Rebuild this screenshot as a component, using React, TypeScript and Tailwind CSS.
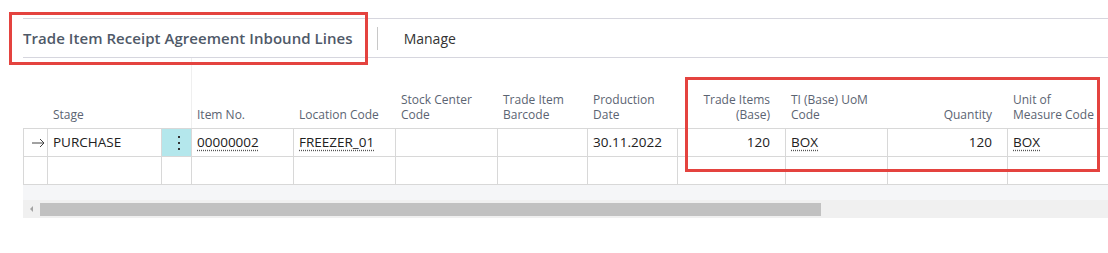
import React from 'react';

type Col = {
    key: string;
    label: string[];
    w: string;
    align?: 'right';
};

/* column widths include the 1px left grid line */
const cols: Col[] = [
    { key: 'arrow', label: [], w: 'w-[24px]' },
    { key: 'stage', label: ['Stage'], w: 'w-[114px]' },
    { key: 'dots', label: [], w: 'w-[30px]' },
    { key: 'item', label: ['Item No.'], w: 'w-[102px]' },
    { key: 'loc', label: ['Location Code'], w: 'w-[102px]' },
    { key: 'stock', label: ['Stock Center', 'Code'], w: 'w-[102px]' },
    { key: 'barcode', label: ['Trade Item', 'Barcode'], w: 'w-[90px]' },
    { key: 'date', label: ['Production', 'Date'], w: 'w-[90px]' },
    { key: 'tib', label: ['Trade Items', '(Base)'], w: 'w-[108px]', align: 'right' },
    { key: 'tiuom', label: ['TI (Base) UoM', 'Code'], w: 'w-[102px]' },
    { key: 'qty', label: ['Quantity'], w: 'w-[120px]', align: 'right' },
    { key: 'uom', label: ['Unit of', 'Measure Code'], w: 'w-[130px]' },
];

const link = 'underline decoration-dotted underline-offset-[2px] decoration-[#555]';

const row: Record<string, React.ReactNode> = {
    stage: 'PURCHASE',
    item: <span className={link}>00000002</span>,
    loc: <span className={link}>FREEZER_01</span>,
    date: '30.11.2022',
    tib: '120',
    tiuom: <span className={link}>BOX</span>,
    qty: '120',
    uom: <span className={link}>BOX</span>,
};

function RowArrow() {
    return (
        <svg width="13" height="10" viewBox="0 0 13 10" fill="none" stroke="#444" strokeWidth="1">
            <path d="M0 5h12M8 1l4 4-4 4" />
        </svg>
    );
}

function Dots() {
    return (
        <div className="flex flex-col gap-[4px]">
            <span className="block w-[2px] h-[2px] bg-[#333]" />
            <span className="block w-[2px] h-[2px] bg-[#333]" />
            <span className="block w-[2px] h-[2px] bg-[#333]" />
        </div>
    );
}

export default function App() {
    return (
        <div className="relative w-[1108px] h-[253px] bg-white overflow-hidden font-['Open_Sans',sans-serif]">
            {/* ── Action bar ── */}
            <div className="pt-[18px] pl-[23px]">
                <div className="h-[40px] flex items-center border-y border-[#d6d6de]">
                    <h1 className="text-[15px] font-semibold text-[#4f5968] tracking-[0.05px] pt-[1px]">
                        Trade Item Receipt Agreement Inbound Lines
                    </h1>
                    <div className="ml-[24px] w-px h-[23px] bg-[#c8c8c8]" />
                    <span className="ml-[26px] text-[14px] text-[#333] pt-[1px]">Manage</span>
                </div>
            </div>

            {/* ── Grid ── */}
            <div className="pl-[23px]">
                {/* header */}
                <div className="flex h-[70px]">
                    {cols.map((c) => (
                        <div
                            key={c.key}
                            className={`${c.w} shrink-0 flex flex-col justify-end pb-[6px] border-l ${c.key === 'item' ? 'border-[#efefef]' : 'border-transparent'} ${c.align === 'right' ? 'items-end pr-[15px]' : 'pl-[5px]'}`}
                        >
                            {c.label.map((l) => (
                                <span
                                    key={l}
                                    className={`text-[12px] leading-[15px] text-[#5b6472] whitespace-nowrap ${c.align === 'right' ? 'text-right' : ''}`}
                                >
                                    {l}
                                </span>
                            ))}
                        </div>
                    ))}
                </div>

                {/* row 1 */}
                <div className="flex h-[29px] border-t border-[#d8d8d8]">
                    {cols.map((c) => (
                        <div
                            key={c.key}
                            className={`${c.w} shrink-0 flex items-center border-l border-b border-[#d8d8d8] text-[13.5px] text-[#212121] whitespace-nowrap ${c.key === 'dots' ? 'justify-center bg-[#b4e7ec]' : ''} ${c.key === 'arrow' ? 'justify-center' : ''} ${c.align === 'right' ? 'justify-end pr-[15px]' : 'pl-[5px]'}`}
                        >
                            {c.key === 'arrow' ? <RowArrow /> : c.key === 'dots' ? <Dots /> : row[c.key]}
                        </div>
                    ))}
                </div>

                {/* row 2 (empty) */}
                <div className="flex h-[28px]">
                    {cols.map((c) => (
                        <div key={c.key} className={`${c.w} shrink-0 border-l border-b border-[#d8d8d8]`} />
                    ))}
                </div>

                {/* footer band */}
                <div className="h-[15px] bg-[#f5f6f8]" />

                {/* horizontal scrollbar */}
                <div className="h-[18px] bg-[#f0f0f0] flex items-center">
                    <div className="w-[17px] flex justify-center">
                        <div className="w-0 h-0 border-y-[3px] border-y-transparent border-r-[3px] border-r-[#a3a3a3]" />
                    </div>
                    <div className="w-[781px] h-[13px] bg-[#c1c1c1]" />
                </div>
            </div>

            {/* ── Annotation boxes ── */}
            <div className="absolute left-[9px] top-[12px] w-[359px] h-[53px] border-[3px] border-[#e4433f]" />
            <div className="absolute left-[685px] top-[77px] w-[415px] h-[95px] border-[3px] border-[#e4433f]" />
        </div>
    );
}
